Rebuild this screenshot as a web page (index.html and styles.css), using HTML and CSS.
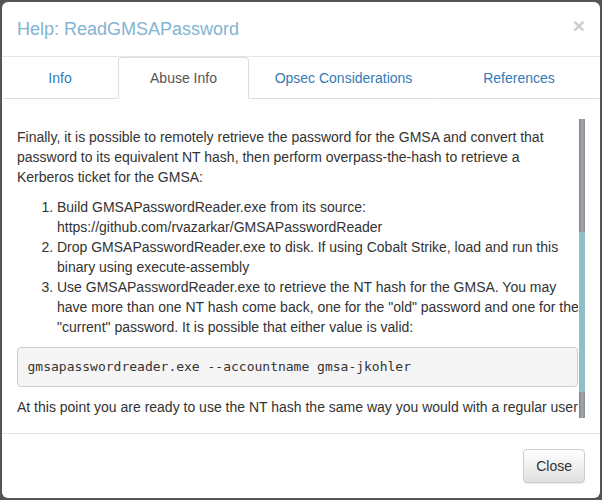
FILE: index.html
```html
<!DOCTYPE html>
<html>
<head>
<meta charset="utf-8">
<link rel="stylesheet" href="styles.css">
</head>
<body>
<div class="modal">
  <div class="modal-header">
    <h4 class="modal-title">Help: ReadGMSAPassword</h4>
    <button class="close" type="button">×</button>
  </div>
  <ul class="tabs">
    <li class="tab tab-info"><a>Info</a></li>
    <li class="tab tab-abuse active"><a>Abuse Info</a></li>
    <li class="tab tab-opsec"><a>Opsec Considerations</a></li>
    <li class="tab tab-refs"><a>References</a></li>
  </ul>
  <div class="modal-body">
    <div class="scroll-area">
      <div class="scroll-content">
        <p>Finally, it is possible to remotely retrieve the password for the GMSA and convert that password to its equivalent NT hash, then perform overpass-the-hash to retrieve a Kerberos ticket for the GMSA:</p>
        <ol>
          <li>Build GMSAPasswordReader.exe from its source: https://github.com/rvazarkar/GMSAPasswordReader</li>
          <li>Drop GMSAPasswordReader.exe to disk. If using Cobalt Strike, load and run this binary using execute-assembly</li>
          <li>Use GMSAPasswordReader.exe to retrieve the NT hash for the GMSA. You may have more than one NT hash come back, one for the "old" password and one for the "current" password. It is possible that either value is valid:</li>
        </ol>
        <pre>gmsapasswordreader.exe --accountname gmsa-jkohler</pre>
        <p>At this point you are ready to use the NT hash the same way you would with a regular user account. You can perform pass-the-hash, overpass-the-hash, or any other technique that takes an NT hash as an input.</p>
      </div>
      <div class="scrollbar">
        <div class="sb-track-top"></div>
        <div class="sb-thumb"></div>
        <div class="sb-track-bottom"></div>
      </div>
    </div>
  </div>
  <div class="modal-footer">
    <button class="btn" type="button">Close</button>
  </div>
</div>
</body>
</html>
```
FILE: styles.css
```css
* { box-sizing: border-box; }
html, body { margin: 0; padding: 0; }
body {
  background: #555555;
  font-family: "Liberation Sans", Arial, sans-serif;
  font-size: 14px;
  line-height: 20px;
  color: #333333;
  padding: 2px;
}
.modal {
  width: 598px;
  height: 496px;
  background: #ffffff;
  border-radius: 6px;
  overflow: hidden;
  display: flex;
  flex-direction: column;
}
.modal-header {
  display: flex;
  justify-content: space-between;
  align-items: flex-start;
  padding: 15px;
  border-bottom: 1px solid #e5e5e5;
  height: 55px;
}
.modal-title {
  margin: 0;
  font-size: 18px;
  font-weight: normal;
  line-height: 24px;
  color: #82b4d2;
}
.close {
  margin-top: -2px;
  padding: 0;
  border: 0;
  background: transparent;
  font-family: "Liberation Sans", Arial, sans-serif;
  font-size: 21px;
  font-weight: bold;
  line-height: 1;
  color: #000;
  opacity: 0.2;
}
.tabs {
  list-style: none;
  margin: 0;
  padding: 0;
  display: flex;
  height: 42px;
}
.tab a {
  display: block;
  text-align: center;
  padding: 10px 15px;
  line-height: 20px;
  color: #337ab7;
  border: 1px solid transparent;
  border-bottom: 1px solid #dddddd;
  border-radius: 4px 4px 0 0;
}
.tab-info { width: 116px; }
.tab-abuse { width: 131px; }
.tab-opsec { width: 189px; }
.tab-refs { flex: 1; }
.tab.active a {
  color: #555555;
  border-color: #dddddd;
  border-bottom-color: transparent;
}
.modal-body {
  padding: 20px 15px 15px;
}
.scroll-area {
  height: 299px;
  display: flex;
  gap: 1px;
  overflow: hidden;
}
.scroll-content {
  flex: 1;
  min-width: 0;
  padding-top: 8px;
  overflow: hidden;
}
.scroll-content p { margin: 0 0 10px; }
.scroll-content ol {
  margin: 0 -6px 10px 0;
  padding-left: 40px;
}
.scroll-content pre {
  margin: 0 0 10px;
  padding: 9.5px;
  font-family: "DejaVu Sans Mono", monospace;
  font-size: 13px;
  line-height: 18.57px;
  color: #333333;
  background: #f5f5f5;
  border: 1px solid #cccccc;
  border-radius: 4px;
  white-space: pre;
}
.scrollbar {
  width: 6px;
  display: flex;
  flex-direction: column;
}
.sb-track-top {
  height: 113px;
  background: linear-gradient(to right, #80838a, #a5a8ad 50%, #888b91);
}
.sb-thumb {
  height: 160px;
  background: #8fc0c5;
}
.sb-track-bottom {
  flex: 1;
  background: linear-gradient(to right, #80838a, #a5a8ad 50%, #888b91);
}
.modal-footer {
  border-top: 1px solid #e5e5e5;
  padding: 15px;
  display: flex;
  justify-content: flex-end;
}
.btn {
  font-family: "Liberation Sans", Arial, sans-serif;
  font-size: 14px;
  line-height: 20px;
  padding: 6px 12px;
  color: #333333;
  border: 1px solid #cccccc;
  border-radius: 4px;
  background: linear-gradient(to bottom, #ffffff 0%, #e0e0e0 100%);
  box-shadow: inset 0 1px 0 rgba(255,255,255,.15), 0 1px 1px rgba(0,0,0,.075);
}
```
